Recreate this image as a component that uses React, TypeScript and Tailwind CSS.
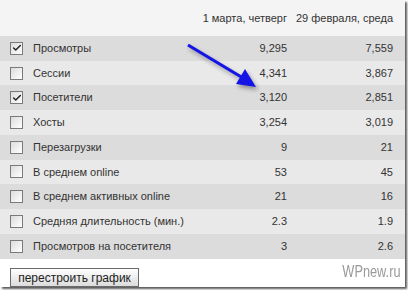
import { Check } from 'lucide-react';

interface Row {
  label: string;
  a: string;
  b: string;
  checked?: boolean;
}

const rows: Row[] = [
  { label: 'Просмотры', a: '9,295', b: '7,559', checked: true },
  { label: 'Сессии', a: '4,341', b: '3,867' },
  { label: 'Посетители', a: '3,120', b: '2,851', checked: true },
  { label: 'Хосты', a: '3,254', b: '3,019' },
  { label: 'Перезагрузки', a: '9', b: '21' },
  { label: 'В среднем online', a: '53', b: '45' },
  { label: 'В среднем активных online', a: '21', b: '16' },
  { label: 'Средняя длительность (мин.)', a: '2.3', b: '1.9' },
  { label: 'Просмотров на посетителя', a: '3', b: '2.6' },
];

function Checkbox({ checked }: { checked?: boolean }) {
  return (
    <span className="w-[13px] h-[13px] border border-[#7a7a7a] bg-gradient-to-br from-[#dcdcdc] to-white flex items-center justify-center">
      {checked && <Check className="w-[10px] h-[10px] text-[#222]" strokeWidth={3.5} />}
    </span>
  );
}

export default function App() {
  return (
    <div className="w-[408px] h-[290px] bg-white font-['Liberation_Sans',Arial,sans-serif] text-[#333]">
      <div className="relative w-[405px] h-[287px] bg-white shadow-[2px_2px_2px_rgba(0,0,0,0.65)] flex flex-col">
        {/* header */}
        <div className="h-[36px] bg-[#f4f4f4] flex items-center text-[11px] pr-[12px]">
          <div className="flex-1" />
          <div className="w-[110px] text-right">1 марта, четверг</div>
          <div className="w-[106px] text-right">29 февраля, среда</div>
        </div>

        {rows.map((r, i) => (
          <div
            key={r.label}
            className={`h-[24.8px] flex items-center text-[11px] pr-[12px] ${i % 2 === 0 ? 'bg-[#dcdcdc]' : 'bg-[#e9e9e9]'}`}
          >
            <div className="ml-[10px]">
              <Checkbox checked={r.checked} />
            </div>
            <div className="ml-[10px] flex-1">{r.label}</div>
            <div className="w-[60px] text-right">{r.a}</div>
            <div className="w-[106px] text-right">{r.b}</div>
          </div>
        ))}

        <div className="flex-1 flex items-end justify-between pl-[10px] pr-[5px]">
          <button className="h-[19px] w-[129px] border border-[#6a6a6a] bg-gradient-to-b from-white to-[#dcdcdc] text-[12px] leading-none text-[#222]">
            перестроить график
          </button>
          <span className="inline-block origin-right scale-x-75 text-[17px] text-[#9a9a9a] mb-[3px]">
            WPnew.ru
          </span>
        </div>

        <svg
          className="absolute left-0 top-0 pointer-events-none"
          width="408"
          height="120"
          style={{ filter: 'drop-shadow(2px 3px 2px rgba(0,0,0,0.35))' }}
        >
          <line x1="188" y1="45" x2="243" y2="78" stroke="#1414e6" strokeWidth="3.2" />
          <polygon points="256,87 236,84 245,69" fill="#1414e6" />
        </svg>
      </div>
    </div>
  );
}
